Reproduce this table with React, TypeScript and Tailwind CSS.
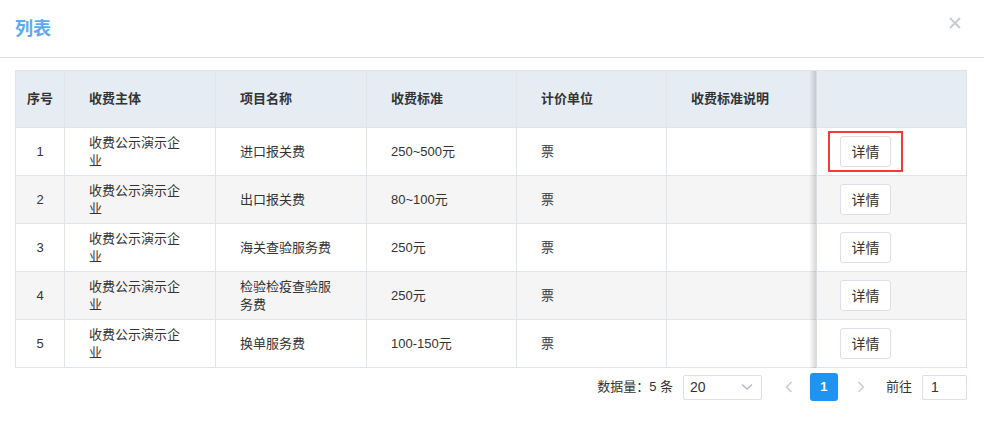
import React from "react";

const rows = [
  { no: "1", name: "进口报关费", price: "250~500元" },
  { no: "2", name: "出口报关费", price: "80~100元" },
  { no: "3", name: "海关查验服务费", price: "250元" },
  { no: "4", name: "检验检疫查验服务费", price: "250元" },
  { no: "5", name: "换单服务费", price: "100-150元" },
];

export default function App() {
  return (
    <div
      className="w-[984px] h-[422px] bg-white text-[#333]"
      style={{ fontFamily: '"Liberation Sans", "Noto Sans CJK SC", sans-serif' }}
    >
      <div className="flex justify-between h-[58px] border-b border-[#e3e3e3] pl-[15px] pr-[23px]">
        <div className="self-center text-[18px] font-bold text-[#5aabf2] leading-none">列表</div>
        <svg className="mt-[17px]" width="12" height="12" viewBox="0 0 12 12">
          <path d="M1 1L11 11M11 1L1 11" stroke="#c8ccd2" strokeWidth="2" />
        </svg>
      </div>

      <div className="pl-[15px] pr-[17px] pt-[12px]">
        <div className="flex border-t border-l border-r border-[#e1e4e8] text-[13px]">
          <div className="flex flex-col">
            <div className="flex h-[57px] bg-[#e6ecf4] border-b border-[#e1e4e8] font-bold items-stretch">
              <div className="w-[49px] border-r border-[#e1e4e8] flex items-center justify-center">序号</div>
              <div className="w-[151px] border-r border-[#e1e4e8] flex items-center pl-[24px]">收费主体</div>
              <div className="w-[151px] border-r border-[#e1e4e8] flex items-center pl-[24px]">项目名称</div>
              <div className="w-[150px] border-r border-[#e1e4e8] flex items-center pl-[24px]">收费标准</div>
              <div className="w-[150px] border-r border-[#e1e4e8] flex items-center pl-[24px]">计价单位</div>
              <div className="w-[149px] flex items-center pl-[24px]">收费标准说明</div>
            </div>
            {rows.map((r, i) => (
              <div
                key={r.no}
                className={`flex h-[48px] border-b border-[#e1e4e8] items-stretch leading-[18px] ${
                  i % 2 === 1 ? "bg-[#f5f5f5]" : "bg-white"
                }`}
              >
                <div className="w-[49px] border-r border-[#e1e4e8] flex items-center justify-center">{r.no}</div>
                <div className="w-[151px] border-r border-[#e1e4e8] flex items-center pl-[24px] pr-[24px]">
                  <span>收费公示演示企业</span>
                </div>
                <div className="w-[151px] border-r border-[#e1e4e8] flex items-center pl-[24px] pr-[24px]">
                  <span>{r.name}</span>
                </div>
                <div className="w-[150px] border-r border-[#e1e4e8] flex items-center pl-[24px]">{r.price}</div>
                <div className="w-[150px] border-r border-[#e1e4e8] flex items-center pl-[24px]">票</div>
                <div className="w-[149px]"></div>
              </div>
            ))}
          </div>
          <div className="relative z-10 flex flex-col w-[150px] border-l border-[#d9dce1]">
            <div className="absolute -left-[8px] top-0 bottom-0 w-[7px] bg-gradient-to-l from-black/15 to-transparent"></div>
            <div className="h-[57px] bg-[#e6ecf4] border-b border-[#e1e4e8]"></div>
            {rows.map((r, i) => (
              <div
                key={r.no}
                className={`relative flex items-center h-[48px] border-b border-[#e1e4e8] pl-[23px] ${
                  i % 2 === 1 ? "bg-[#f5f5f5]" : "bg-white"
                }`}
              >
                <button className="w-[51px] h-[31px] border border-[#dcdfe6] rounded-[3px] bg-white text-[14px] text-[#333] leading-none">
                  详情
                </button>
                {i === 0 && (
                  <div className="absolute left-[11px] top-[3px] w-[75px] h-[41px] border-2 border-[#f43b3b]"></div>
                )}
              </div>
            ))}
          </div>
        </div>

        <div className="flex justify-end items-center mt-[5px] h-[28px] text-[13px] text-[#333]">
          <span>数据量：5 条</span>
          <div className="ml-[10px] w-[79px] h-[25px] border border-[#dcdfe6] rounded-[2px] flex items-center justify-between pl-[6px] pr-[8px] text-[14px]">
            <span>20</span>
            <svg width="12" height="8" viewBox="0 0 12 8">
              <path d="M1 1.5L6 6L11 1.5" stroke="#b4b8bf" strokeWidth="1.4" fill="none" />
            </svg>
          </div>
          <div className="ml-[13px] w-[28px] h-[28px] flex items-center justify-center">
            <svg width="8" height="12" viewBox="0 0 8 12">
              <path d="M6.5 1L1.5 6L6.5 11" stroke="#c6cad0" strokeWidth="1.4" fill="none" />
            </svg>
          </div>
          <div className="ml-[7px] w-[28px] h-[28px] rounded-[3px] bg-[#1e94f0] text-white font-bold flex items-center justify-center">
            1
          </div>
          <div className="ml-[9px] w-[28px] h-[28px] flex items-center justify-center">
            <svg width="8" height="12" viewBox="0 0 8 12">
              <path d="M1.5 1L6.5 6L1.5 11" stroke="#c6cad0" strokeWidth="1.4" fill="none" />
            </svg>
          </div>
          <span className="ml-[11px]">前往</span>
          <div className="ml-[10px] w-[45px] h-[25px] border border-[#dcdfe6] rounded-[2px] flex items-center pl-[8px] text-[14px]">
            1
          </div>
        </div>
      </div>
    </div>
  );
}
